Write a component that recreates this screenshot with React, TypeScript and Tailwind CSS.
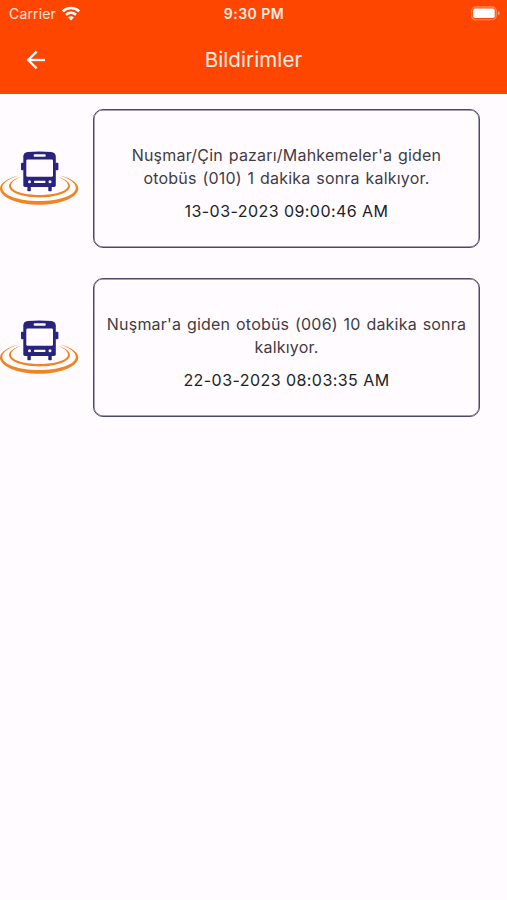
type Notification = {
  id: number;
  message: string;
  date: string;
};

const notifications: Notification[] = [
  {
    id: 1,
    message: "Nuşmar/Çin pazarı/Mahkemeler'a giden otobüs (010) 1 dakika sonra kalkıyor.",
    date: "13-03-2023 09:00:46 AM",
  },
  {
    id: 2,
    message: "Nuşmar'a giden otobüs (006) 10 dakika sonra kalkıyor.",
    date: "22-03-2023 08:03:35 AM",
  },
];

function WifiIcon() {
  return (
    <svg width="20" height="16" viewBox="0 0 20 16" fill="none" stroke="#fff" strokeWidth="2.6">
      <path d="M1.8 5.4a11.7 11.7 0 0 1 16.4 0" />
      <path d="M5 8.800a7.200 7.200 0 0 1 10 0" />
      <path d="M10 14.400 7.100 11.400a4 4 0 0 1 5.800 0z" fill="#fff" stroke="none" />
    </svg>
  );
}

function BatteryIcon() {
  return (
    <svg width="31" height="15" viewBox="0 0 31 15">
      <rect x="1.600" y="1" width="24.600" height="12.600" rx="3.800" fill="none" stroke="#fff" strokeOpacity="0.35" strokeWidth="1.3" />
      <rect x="3.200" y="2.600" width="21.500" height="9.400" rx="1.800" fill="#fff" />
      <path d="M27.800 5.200c1.400.4 2 1.100 2 2s-.6 1.600-2 2z" fill="#fff" fillOpacity="0.45" />
    </svg>
  );
}

function BackIcon() {
  return (
    <svg width="20" height="20" viewBox="0 0 20 20" fill="none" stroke="#fff" strokeWidth="2.3">
      <path d="M19 10H2.400" />
      <path d="M10.600 1.600 2.200 10l8.400 8.400" />
    </svg>
  );
}

function BusIcon() {
  return (
    <svg width="79" height="56" viewBox="0 0 79 56">
      {/* rings */}
      <g fill="#ee8422">
        <path d="M19 25.500C8 28 0 33 0 38.500 0 47.500 17.500 54.800 39 54.800S78.300 47.500 78.300 38.500c0-5.500-7.500-10.500-18.500-13C69.500 28.700 75.800 33 75.800 37.800 75.800 45.500 59.700 51 39 51S2.300 45.500 2.300 37.800C2.300 33 9 28.700 19 25.500z" />
        <path d="M20.500 27C13.500 29 9 32.500 9 36c0 6.500 13.700 11.400 30.500 11.400S70 42.500 70 36c0-3.500-4.500-7-11.500-9C64.500 29.500 68 32.500 68 35.500c0 5.500-12.800 9.500-28.500 9.500S11 41 11 35.500c0-3 3.500-6 9.500-8.500z" />
      </g>
      {/* bus */}
      <g fill="#28237c">
        <path d="M23.300 6.500c0-2.700 1.700-4.200 4.400-4.500 7.500-.7 16-.7 23.500 0 2.700.3 4.600 1.800 4.600 4.500v28.800a1.700 1.700 0 0 1-1.700 1.700H25a1.700 1.700 0 0 1-1.700-1.700z" />
        <rect x="21" y="12.700" width="3" height="7.500" rx="1" />
        <rect x="55.200" y="12.700" width="3.200" height="7.500" rx="1" />
        <rect x="27.400" y="36" width="3.400" height="5.300" rx="0.800" />
        <rect x="48.300" y="36" width="3.400" height="5.300" rx="0.800" />
      </g>
      <g fill="#fffbff">
        <rect x="26.300" y="9.500" width="26.700" height="17.200" rx="1.300" />
        <rect x="33.700" y="4.200" width="12" height="2.600" rx="0.800" />
        <rect x="34" y="30.700" width="11.500" height="2.300" rx="0.700" />
        <circle cx="29.500" cy="31.800" r="1.500" />
        <circle cx="50" cy="31.800" r="1.500" />
      </g>
    </svg>
  );
}

function StatusBar() {
  return (
    <div className="grid h-[27px] grid-cols-3 items-center pl-[9px] pr-[6px]">
      <div className="flex items-center gap-[5px]">
        <span className="text-[14px] tracking-[0.15px] text-white/85">Carrier</span>
        <WifiIcon />
      </div>
      <span className="pr-[2px] text-center text-[14px] font-semibold tracking-[0.5px] text-white/90">9:30 PM</span>
      <div className="flex justify-end">
        <BatteryIcon />
      </div>
    </div>
  );
}

function NotificationRow({ message, date }: Notification) {
  return (
    <div className="flex items-center">
      <div className="w-[93px] shrink-0 pb-[2px]">
        <BusIcon />
      </div>
      <div className="h-[139px] w-[387px] rounded-[10px] border border-[#4b486c] px-[10px] pt-[34px] text-center text-[16px] shadow-[inset_0_0_0_0.5px_#4b486c]">
        <p className="leading-[23px] tracking-[0.2px] text-[#3f3d42] [word-spacing:1.1px]">{message}</p>
        <p className="mt-[10px] leading-[23px] tracking-[0.44px] text-[#201f23]">{date}</p>
      </div>
    </div>
  );
}

export default function App() {
  return (
    <div className="min-h-screen bg-[#fffbff] font-['Inter',sans-serif]">
      <header className="h-[94px] bg-[#ff4600]">
        <StatusBar />
        <div className="grid h-[66px] grid-cols-[100px_1fr_100px] items-center">
          <button className="pl-[26px]">
            <BackIcon />
          </button>
          <h1 className="text-center text-[20.5px] tracking-[0.1px] text-white/90">Bildirimler</h1>
        </div>
      </header>

      <main className="flex flex-col gap-[30px] pt-[15px]">
        {notifications.map((item) => (
          <NotificationRow key={item.id} {...item} />
        ))}
      </main>
    </div>
  );
}
